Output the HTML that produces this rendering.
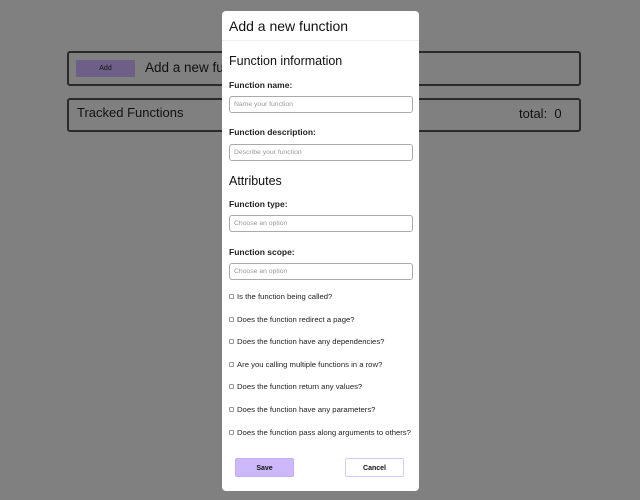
<!DOCTYPE html>
<html><head><style>
*{margin:0;padding:0;box-sizing:border-box}
body{width:640px;height:500px;background:#808080;font-family:"Liberation Sans",sans-serif;position:relative;overflow:hidden;color:#111}
.box{position:absolute;left:67px;width:514px;border:2px solid #2a2a2a;border-radius:3px}
.abs{position:absolute;white-space:nowrap}
.modal{position:absolute;left:222px;top:11px;width:197px;height:480px;background:#fff;border-radius:4px}
.inp{position:absolute;left:7px;width:184px;height:17px;border:1px solid #aaa;border-radius:3px;font-size:6.8px;color:#999;padding:4px 0 0 4px}
.lbl{position:absolute;left:7px;font-size:8.5px;font-weight:bold;color:#222}
.cb{position:absolute;left:7px;font-size:7.7px;color:#222;white-space:nowrap}
.cb i{display:inline-block;width:5px;height:5px;border:1px solid #999;border-radius:1px;margin-right:3px;vertical-align:0}
.btn{position:absolute;top:447px;width:59px;height:19px;border-radius:2px;font-size:7px;font-weight:bold;text-align:center;line-height:19px}
</style></head><body>
<div class="box" style="top:51px;height:35px"></div>
<div class="abs" style="left:76px;top:60px;width:59px;height:17px;background:#6e5f88;border-radius:1px;font-size:7px;text-align:center;line-height:17px;color:#111">Add</div>
<div class="abs" style="left:145px;top:60px;font-size:13.5px">Add a new function</div>
<div class="box" style="top:98px;height:34px"></div>
<div class="abs" style="left:77px;top:105px;font-size:13px">Tracked Functions</div>
<div class="abs" style="left:519px;top:106px;font-size:13px">total:&nbsp; 0</div>
<div class="modal">
<div class="abs" style="left:7px;top:7px;font-size:14px">Add a new function</div>
<div class="abs" style="left:0;top:29px;width:197px;height:1px;background:#eee"></div>
<div class="abs" style="left:7px;top:43px;font-size:12.5px">Function information</div>
<div class="lbl" style="top:69px">Function name:</div>
<div class="inp" style="top:85px">Name your function</div>
<div class="lbl" style="top:116px">Function description:</div>
<div class="inp" style="top:133px">Describe your function</div>
<div class="abs" style="left:7px;top:163px;font-size:12.5px">Attributes</div>
<div class="lbl" style="top:188px">Function type:</div>
<div class="inp" style="top:204px">Choose an option</div>
<div class="lbl" style="top:236px">Function scope:</div>
<div class="inp" style="top:252px">Choose an option</div>
<div class="cb" style="top:281px"><i></i>Is the function being called?</div>
<div class="cb" style="top:304px"><i></i>Does the function redirect a page?</div>
<div class="cb" style="top:326px"><i></i>Does the function have any dependencies?</div>
<div class="cb" style="top:349px"><i></i>Are you calling multiple functions in a row?</div>
<div class="cb" style="top:371px"><i></i>Does the function return any values?</div>
<div class="cb" style="top:394px"><i></i>Does the function have any parameters?</div>
<div class="cb" style="top:417px"><i></i>Does the function pass along arguments to others?</div>
<div class="btn" style="left:13px;background:#cdb8fb;border:1px solid #c4aef5">Save</div>
<div class="btn" style="left:123px;background:#fff;border:1px solid #d9c9fb">Cancel</div>
</div>
</body></html>
